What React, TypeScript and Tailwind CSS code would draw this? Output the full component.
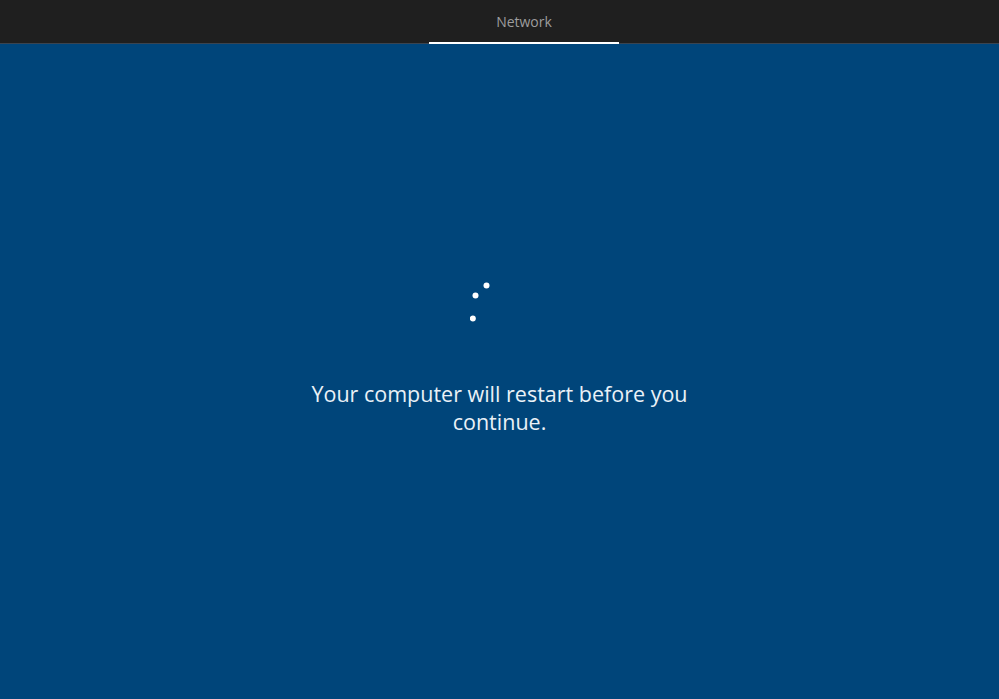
import React from 'react';

const Spinner = () => (
  <svg width="60" height="50" viewBox="0 0 60 50" className="block">
    <circle cx="16.5" cy="5.5" r="3" fill="#ffffff" />
    <circle cx="5.5" cy="15.5" r="3" fill="#ffffff" />
    <circle cx="2.8" cy="38.5" r="3" fill="#ffffff" />
  </svg>
);

const App = () => {
  return (
    <div className="w-[999px] h-[699px] flex flex-col bg-[#00457a] overflow-hidden" style={{ fontFamily: 'Inter' }}>
      {/* top step bar */}
      <div className="h-[44px] bg-[#1f1f1f] flex justify-center border-b border-[#3a4450]">
        <div className="w-[190px] ml-[49px] flex items-center justify-center border-b-2 border-white -mb-px">
          <span className="text-[14px] text-[#9d9d9d] font-['Open_Sans',sans-serif]">Network</span>
        </div>
      </div>

      {/* main */}
      <div className="flex-1 flex flex-col items-center pt-[236px]">
        <Spinner />
        <p className="mt-[50px] w-[420px] text-center text-[21.5px] leading-[28px] text-[#eaf1f7] font-['Open_Sans',sans-serif]">
          Your computer will restart before you continue.
        </p>
      </div>
    </div>
  );
};

export default App;
